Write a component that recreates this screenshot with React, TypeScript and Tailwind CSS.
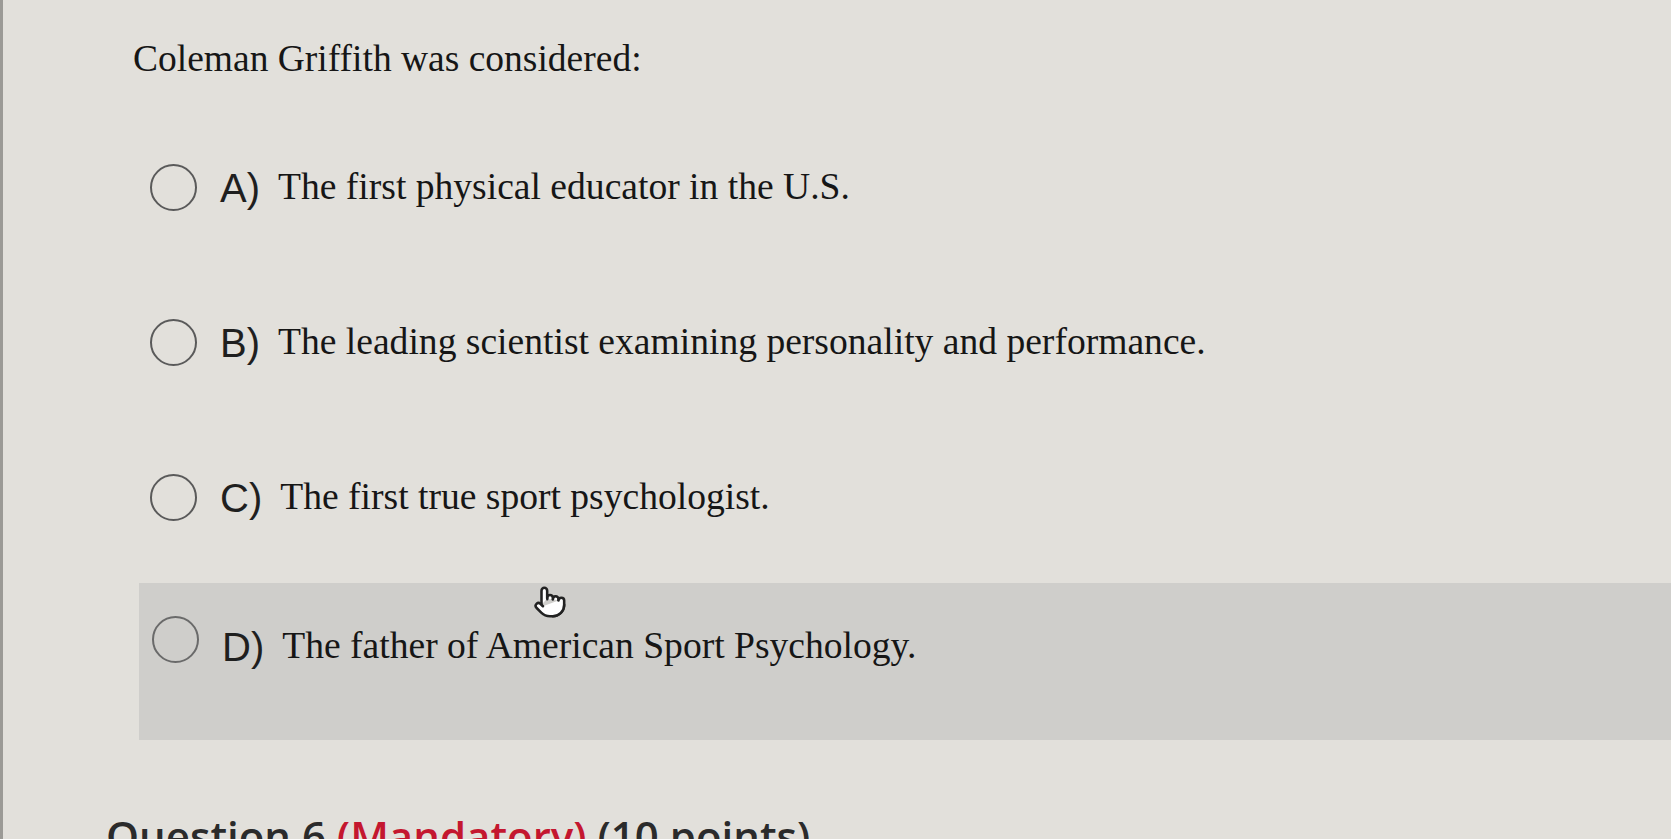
import { Pointer } from 'lucide-react';

interface Choice {
  letter: string;
  text: string;
}

const choices: Choice[] = [
  { letter: 'A)', text: 'The first physical educator in the U.S.' },
  { letter: 'B)', text: 'The leading scientist examining personality and performance.' },
  { letter: 'C)', text: 'The first true sport psychologist.' },
];

function ChoiceRow({ choice }: { choice: Choice }) {
  return (
    <div className="flex items-center h-[155px] pl-[147px]">
      <div className="w-[47px] h-[47px] rounded-full border-2 border-[#5a5a5a] shrink-0" />
      <span className="ml-[23px] text-[40px] text-[#1f1f1f] font-['Liberation_Sans',Arial,sans-serif]">
        {choice.letter}
      </span>
      <span className="ml-[18px] text-[37.6px] text-[#161616]">{choice.text}</span>
    </div>
  );
}

export default function App() {
  return (
    <div className="relative h-[839px] overflow-hidden bg-[#e2e0db] border-l-[3px] border-[#9b9a96] font-['Liberation_Serif','Times_New_Roman',serif]">
      {/* Question */}
      <div className="pt-[34px] pl-[130px] text-[37.5px] text-[#161616] leading-[50px]">
        Coleman Griffith was considered:
      </div>

      <div className="mt-[26px]">
        {choices.map((c) => (
          <ChoiceRow key={c.letter} choice={c} />
        ))}
      </div>

      {/* Hovered choice */}
      <div className="ml-[136px] mt-[8px] h-[157px] bg-[#cfcecb] flex items-center pl-[13px] pb-[30px]">
        <div className="w-[47px] h-[47px] rounded-full border-2 border-[#6a6a6a] shrink-0 -mt-[14px]" />
        <span className="ml-[23px] text-[40px] text-[#1f1f1f] font-['Liberation_Sans',Arial,sans-serif]">
          D)
        </span>
        <span className="ml-[18px] text-[37.6px] text-[#161616]">The father of American Sport Psychology.</span>
      </div>

      <Pointer className="absolute left-[530px] top-[585px] w-[34px] h-[34px] text-[#222] fill-white" strokeWidth={1.8} />

      {/* Next question */}
      <div className="mt-[72px] pl-[103px] text-[42px] font-semibold text-[#2b2b2b] font-['Open_Sans','Liberation_Sans',sans-serif] leading-[48px] whitespace-nowrap">
        Question 6 <span className="text-[#c4172f]">(Mandatory)</span> (10 points)
      </div>
    </div>
  );
}
